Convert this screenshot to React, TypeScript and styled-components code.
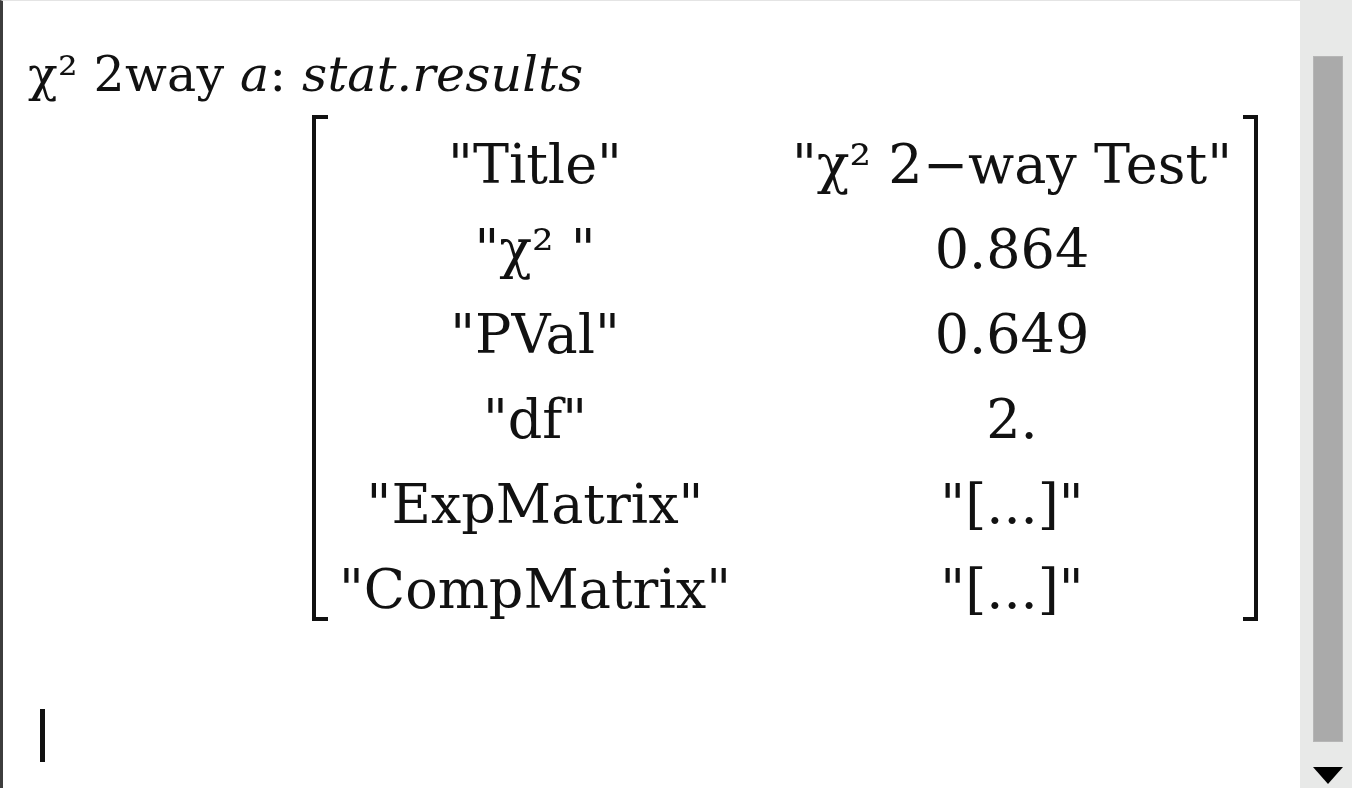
import React from "react";
import styled, { createGlobalStyle } from "styled-components";

const Global = createGlobalStyle`
  html, body { margin: 0; padding: 0; background: #ffffff; }
  body { font-family: "DejaVu Serif", "Liberation Serif", serif; color: #111; }
  #root { width: 1352px; height: 788px; overflow: hidden; }
`;

const Screen = styled.div`
  display: flex;
  width: 1352px;
  height: 788px;
  background: #fff;
`;

const Page = styled.div`
  flex: 1;
  display: flex;
  flex-direction: column;
  border-left: 3px solid #3d3d3d;
  border-top: 1px solid #e4e4e4;
  padding: 42px 0 0 25px;
  box-sizing: border-box;
`;

const Entry = styled.div`
  font-size: 49px;
  line-height: 64px;
  white-space: nowrap;
  letter-spacing: 0.2px;
`;

const Ital = styled.span`
  font-style: italic;
`;

const MatrixWrap = styled.div`
  display: flex;
  align-items: stretch;
  margin: 8px 0 0 284px;
`;

const Bracket = styled.div<{ $side: "left" | "right" }>`
  width: ${(p) => (p.$side === "left" ? 16 : 15)}px;
  box-sizing: border-box;
  border: 4px solid #111;
  ${(p) => (p.$side === "left" ? "border-right: none;" : "border-left: none;")}
`;

const Grid = styled.div`
  display: grid;
  grid-template-columns: 414px 462px;
  column-gap: 39px;
  padding-top: 7px;
  margin-bottom: -11px;
  font-size: 54px;
  line-height: 85px;
`;

const Cell = styled.div`
  text-align: center;
  white-space: nowrap;
`;

const Cursor = styled.div`
  width: 5px;
  height: 53px;
  background: #111;
  margin: 88px 0 0 12px;
`;

const Scrollbar = styled.div`
  width: 52px;
  background: #e8e9e8;
  display: flex;
  flex-direction: column;
  align-items: flex-start;
  padding: 56px 9px 4px 13px;
  box-sizing: border-box;
`;

const Thumb = styled.div`
  width: 30px;
  height: 686px;
  background: #aaaaaa;
  box-sizing: border-box;
  border: 1px solid #b6b6b6;
`;

const ArrowDown = styled.svg`
  margin-top: 25px;
  display: block;
`;

const rows: [string, string][] = [
  ['"Title"', '"χ² 2−way Test"'],
  ['"χ² "', "0.864"],
  ['"PVal"', "0.649"],
  ['"df"', "2."],
  ['"ExpMatrix"', '"[...]"'],
  ['"CompMatrix"', '"[...]"'],
];

export default function App() {
  return (
    <>
      <Global />
      <Screen>
        <Page>
          <Entry>
            χ² 2way <Ital>a</Ital>: <Ital>stat.results</Ital>
          </Entry>
          <MatrixWrap>
            <Bracket $side="left" />
            <Grid>
              {rows.map(([k, v]) => (
                <React.Fragment key={k}>
                  <Cell>{k}</Cell>
                  <Cell>{v}</Cell>
                </React.Fragment>
              ))}
            </Grid>
            <Bracket $side="right" />
          </MatrixWrap>
          <Cursor />
        </Page>
        <Scrollbar>
          <Thumb />
          <ArrowDown width="30" height="17" viewBox="0 0 30 17">
            <polygon points="0,0 30,0 15,17" fill="#000" />
          </ArrowDown>
        </Scrollbar>
      </Screen>
    </>
  );
}
